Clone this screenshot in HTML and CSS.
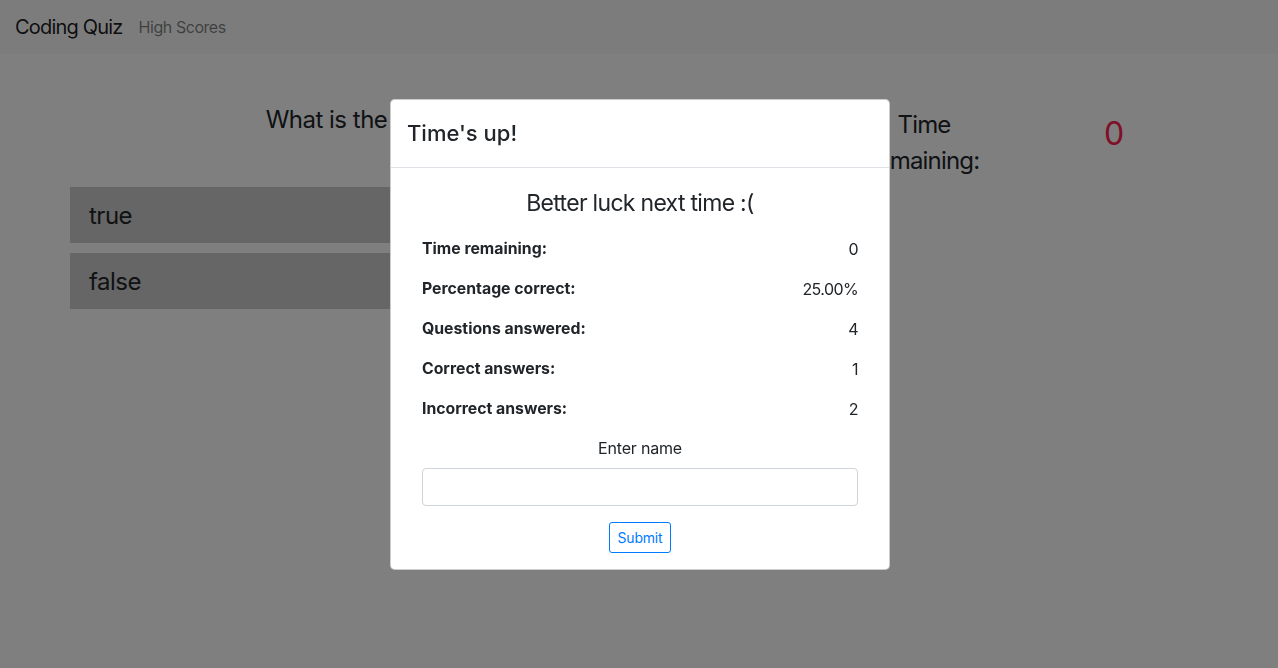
FILE: index.html
```html
<!DOCTYPE html>
<html lang="en">
<head>
<meta charset="utf-8">
<title>Coding Quiz</title>
<link rel="stylesheet" href="styles.css">
</head>
<body>
<nav class="navbar">
  <a class="brand" href="#">Coding Quiz</a>
  <a class="nav-link" href="#">High Scores</a>
</nav>
<main class="main">
  <section class="quiz">
    <h2 class="question">What is the result of !!"false"?</h2>
    <button class="answer">true</button>
    <button class="answer">false</button>
  </section>
  <div class="timer-label">Time remaining:</div>
  <div class="timer-value">0</div>
</main>

<div class="backdrop">
  <div class="modal">
    <div class="modal-header">
      <h4 class="modal-title">Time's up!</h4>
    </div>
    <div class="modal-body">
      <h4 class="result-title">Better luck next time :(</h4>
      <div class="stats">
        <div class="stat"><span class="stat-label">Time remaining:</span><span class="stat-value">0</span></div>
        <div class="stat"><span class="stat-label">Percentage correct:</span><span class="stat-value">25.00%</span></div>
        <div class="stat"><span class="stat-label">Questions answered:</span><span class="stat-value">4</span></div>
        <div class="stat"><span class="stat-label">Correct answers:</span><span class="stat-value">1</span></div>
        <div class="stat"><span class="stat-label">Incorrect answers:</span><span class="stat-value">2</span></div>
        <form class="name-form">
          <label class="name-label" for="name">Enter name</label>
          <input class="name-input" id="name" type="text">
          <button class="submit-btn" type="button">Submit</button>
        </form>
      </div>
    </div>
  </div>
</div>
</body>
</html>
```

FILE: styles.css
```css
* { box-sizing: border-box; }

body {
  margin: 0;
  font-family: Inter, "Noto Sans", sans-serif;
  font-size: 16px;
  line-height: 1.5;
  color: #212529;
  background: #fff;
}

.navbar {
  display: flex;
  align-items: center;
  height: 54px;
  padding: 0 15px;
  background: #f8f9fa;
}

.brand {
  font-size: 20px;
  color: rgba(0, 0, 0, 0.9);
  text-decoration: none;
  margin-right: 16px;
  letter-spacing: -0.8px;
}

.nav-link {
  font-size: 16px;
  color: rgba(0, 0, 0, 0.5);
  text-decoration: none;
  letter-spacing: -0.45px;
}

.main {
  display: flex;
  align-items: flex-start;
  padding: 48px 0 0 70px;
}

.quiz {
  width: 750px;
}

.question {
  margin: 0 0 49px;
  padding-right: 38px;
  font-size: 24px;
  font-weight: 400;
  line-height: 36px;
  letter-spacing: -0.5px;
  text-align: center;
  white-space: nowrap;
}

.answer {
  display: block;
  width: 100%;
  height: 56px;
  margin: 0 0 10px;
  padding: 0 19px;
  border: 0;
  background: #cccccc;
  color: #212529;
  font-family: inherit;
  font-size: 24px;
  letter-spacing: -0.5px;
  text-align: left;
}

.timer-label {
  width: 130px;
  margin: 5px 0 0 39px;
  font-size: 24px;
  line-height: 36px;
  letter-spacing: -0.8px;
  text-align: center;
}

.timer-value {
  width: 250px;
  margin-top: 8px;
  font-size: 32px;
  line-height: 48px;
  text-align: center;
  color: #ff2050;
}

.backdrop {
  position: fixed;
  inset: 0;
  background: rgba(0, 0, 0, 0.5);
  display: flex;
  align-items: center;
  justify-content: center;
}

.modal {
  width: 500px;
  margin: 0 0 -1px 2px;
  background: #fff;
  border: 1px solid rgba(0, 0, 0, 0.2);
  border-radius: 4.8px;
}

.modal-header {
  padding: 16px;
  border-bottom: 1px solid #dee2e6;
}

.modal-title {
  margin: 0;
  font-size: 22px;
  font-weight: 500;
  line-height: 35px;
}

.modal-body {
  padding: 17px 16px 16px;
}

.result-title {
  margin: 0 0 15px;
  font-size: 23px;
  font-weight: 400;
  line-height: 36px;
  letter-spacing: -0.7px;
  text-align: center;
}

.stats {
  padding: 0 15px;
}

.stat {
  display: flex;
  justify-content: space-between;
  line-height: 24px;
  margin-bottom: 16px;
  padding-top: 1px;
  height: 24px;
}

.stat-label {
  font-weight: 700;
  font-size: 15.8px;
}

.stat-value {
  letter-spacing: -0.6px;
}

.name-form {
  display: flex;
  flex-direction: column;
  align-items: center;
}

.name-label {
  line-height: 24px;
  margin-bottom: 8px;
  letter-spacing: -0.2px;
}

.name-input {
  width: 100%;
  height: 38px;
  border: 1px solid #ced4da;
  border-radius: 4px;
  margin-bottom: 16px;
}

.submit-btn {
  height: 31px;
  padding: 0 7.5px;
  border: 1px solid #007bff;
  border-radius: 3px;
  background: #fff;
  color: #007bff;
  font-family: inherit;
  font-size: 14px;
  letter-spacing: -0.2px;
}
```
